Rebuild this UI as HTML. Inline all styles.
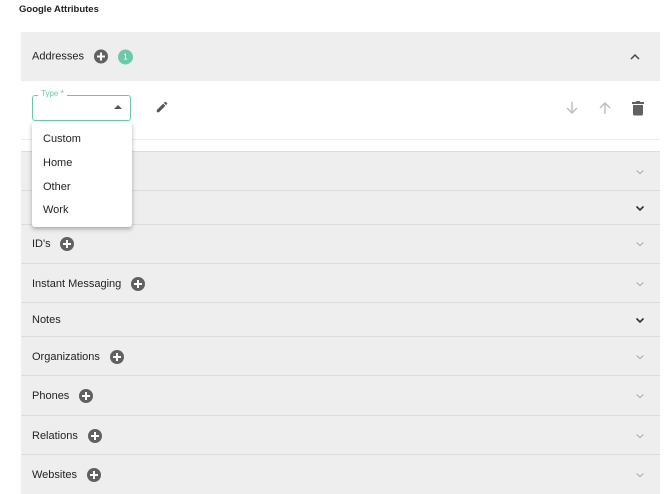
<!DOCTYPE html>
<html><head><meta charset="utf-8"><style>
*{margin:0;padding:0;box-sizing:border-box}
body{width:670px;height:490px;background:#fff;font-family:"Liberation Sans",Arial,sans-serif;color:#222;position:relative;overflow:hidden}
.abs{position:absolute}
.title{left:19px;top:4px;font-size:9.5px;font-weight:bold;color:#222}
.row{position:absolute;left:21px;width:639px;background:#eeeeee;border-top:1px solid #dcdcdc}
.lbl{position:absolute;left:11px;font-size:11px;color:#222;display:flex;align-items:center;top:50%;transform:translateY(-50%)}
.plus{display:inline-block;width:14px;height:14px;border-radius:50%;background:#616161;margin-left:10px;position:relative}
.plus:before,.plus:after{content:"";position:absolute;background:#fff;left:50%;top:50%}
.plus:before{width:8px;height:2px;margin:-1px 0 0 -4px}
.plus:after{width:2px;height:8px;margin:-4px 0 0 -1px}
.chev{position:absolute;right:14px;top:50%;margin-top:-6px}
</style></head><body>
<div class="abs title">Google Attributes</div>

<div class="row" style="top:32px;height:49px;border-top:none">
  <div class="lbl">Addresses<span class="plus"></span><span style="display:inline-block;width:15px;height:15px;border-radius:50%;background:#6ccaa8;color:#fff;font-size:8px;text-align:center;line-height:15px;margin-left:10px">1</span></div>
  <svg class="chev" style="right:19px" width="12" height="12" viewBox="0 0 12 12"><path d="M2 8L6 4L10 8" stroke="#444" stroke-width="1.5" fill="none"/></svg>
</div>
<div class="abs" style="left:21px;top:81px;width:639px;height:59px;background:#fff;border-bottom:1px solid #eee"></div>
<div class="abs" style="left:32px;top:95px;width:99px;height:26px;border:1.5px solid #6ccaa8;border-radius:3px"></div>
<div class="abs" style="left:38px;top:89px;background:#fff;padding:0 3px;font-size:8px;color:#6ccaa8">Type *</div>
<svg class="abs" style="left:114px;top:104px" width="8" height="6"><path d="M0 5L4 1L8 5Z" fill="#555"/></svg>
<svg class="abs" style="left:155px;top:100px" width="14" height="14" viewBox="0 0 24 24"><path d="M3 17.25V21h3.75L17.81 9.94l-3.75-3.75L3 17.25zM20.71 7.04a1 1 0 000-1.41l-2.34-2.34a1 1 0 00-1.41 0l-1.830 1.83 3.75 3.75 1.83-1.83z" fill="#555"/></svg>
<svg class="abs" style="left:565px;top:101px" width="14" height="14" viewBox="0 0 14 14"><path d="M7 1V12M2 7L7 12L12 7" stroke="#bbb" stroke-width="1.4" fill="none"/></svg>
<svg class="abs" style="left:598px;top:101px" width="14" height="14" viewBox="0 0 14 14"><path d="M7 13V2M2 7L7 2L12 7" stroke="#bbb" stroke-width="1.4" fill="none"/></svg>
<svg class="abs" style="left:631px;top:100px" width="14" height="16" viewBox="0 0 14 16"><path d="M1 2H4.5L5.5 1H8.5L9.5 2H13V4H1Z M2 5H12V14a1.5 1.5 0 01-1.5 1.5h-7A1.5 1.5 0 012 14Z" fill="#616161"/></svg>

<div class="row" style="top:151px;height:40px"><svg class="chev" width="12" height="12" viewBox="0 0 12 12"><path d="M2.5 4.5L6 7.5L9.5 4.5" stroke="#aaa" stroke-width="1.1" fill="none"/></svg></div>
<div class="row" style="top:190px;height:34px"><svg class="chev" width="12" height="12" viewBox="0 0 12 12"><path d="M2.5 4.5L6 8L9.5 4.5" stroke="#333" stroke-width="1.6" fill="none"/></svg></div>
<div class="row" style="top:224px;height:39px"><div class="lbl">ID's<span class="plus" style="margin-left:9px"></span></div><svg class="chev" width="12" height="12" viewBox="0 0 12 12"><path d="M2.5 4.5L6 7.5L9.5 4.5" stroke="#aaa" stroke-width="1.1" fill="none"/></svg></div>
<div class="row" style="top:263px;height:40px"><div class="lbl">Instant Messaging<span class="plus"></span></div><svg class="chev" width="12" height="12" viewBox="0 0 12 12"><path d="M2.5 4.5L6 7.5L9.5 4.5" stroke="#aaa" stroke-width="1.1" fill="none"/></svg></div>
<div class="row" style="top:302px;height:34px"><div class="lbl">Notes</div><svg class="chev" width="12" height="12" viewBox="0 0 12 12"><path d="M2.5 4.5L6 8L9.5 4.5" stroke="#333" stroke-width="1.6" fill="none"/></svg></div>
<div class="row" style="top:336px;height:40px"><div class="lbl">Organizations<span class="plus"></span></div><svg class="chev" width="12" height="12" viewBox="0 0 12 12"><path d="M2.5 4.5L6 7.5L9.5 4.5" stroke="#aaa" stroke-width="1.1" fill="none"/></svg></div>
<div class="row" style="top:375px;height:40px"><div class="lbl">Phones<span class="plus"></span></div><svg class="chev" width="12" height="12" viewBox="0 0 12 12"><path d="M2.5 4.5L6 7.5L9.5 4.5" stroke="#aaa" stroke-width="1.1" fill="none"/></svg></div>
<div class="row" style="top:415px;height:40px"><div class="lbl">Relations<span class="plus"></span></div><svg class="chev" width="12" height="12" viewBox="0 0 12 12"><path d="M2.5 4.5L6 7.5L9.5 4.5" stroke="#aaa" stroke-width="1.1" fill="none"/></svg></div>
<div class="row" style="top:454px;height:40px"><div class="lbl">Websites<span class="plus"></span></div><svg class="chev" width="12" height="12" viewBox="0 0 12 12"><path d="M2.5 4.5L6 7.5L9.5 4.5" stroke="#aaa" stroke-width="1.1" fill="none"/></svg></div>

<div class="abs" style="left:32px;top:122px;width:100px;height:105px;background:#fff;border-radius:3px;box-shadow:0 2px 5px rgba(0,0,0,.3);font-size:11px;color:#222">
  <div style="position:absolute;left:11px;top:11px">Custom</div>
  <div style="position:absolute;left:11px;top:35px">Home</div>
  <div style="position:absolute;left:11px;top:59px">Other</div>
  <div style="position:absolute;left:11px;top:82px">Work</div>
</div>
</body></html>
